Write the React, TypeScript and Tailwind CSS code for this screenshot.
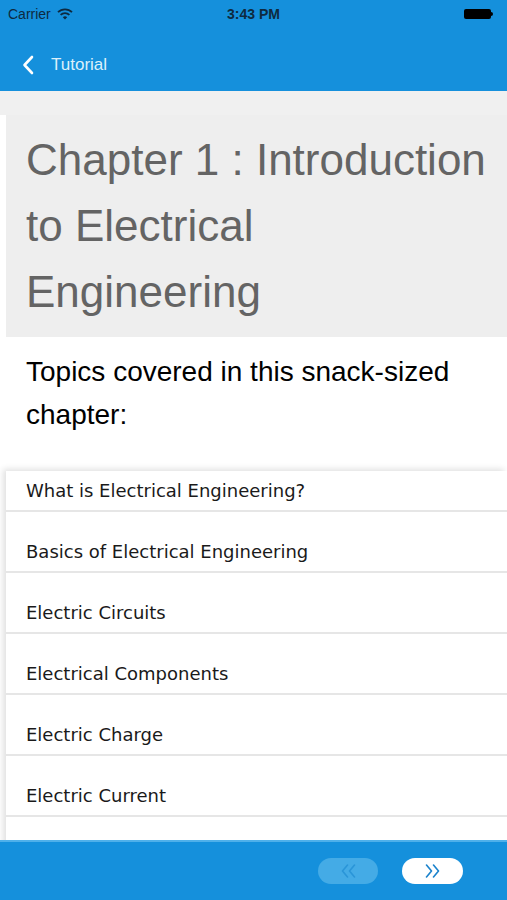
import React from "react";

const topics = [
  "What is Electrical Engineering?",
  "Basics of Electrical Engineering",
  "Electric Circuits",
  "Electrical Components",
  "Electric Charge",
  "Electric Current",
];

function Chevrons({ dir, className }: { dir: "left" | "right"; className: string }) {
  const d = dir === "left" ? "M7 1 L2 7 L7 13 M14 1 L9 7 L14 13" : "M2 1 L7 7 L2 13 M9 1 L14 7 L9 13";
  return (
    <svg width="17" height="14" viewBox="0 0 16 14" className={className}>
      <path d={d} fill="none" stroke="currentColor" strokeWidth="1.6" strokeLinecap="round" strokeLinejoin="round" />
    </svg>
  );
}

export default function App() {
  return (
    <div className="flex h-[900px] w-[507px] flex-col overflow-hidden bg-white font-['Liberation_Sans',Arial,sans-serif]">
      {/* status + nav */}
      <div className="h-[91px] shrink-0 bg-[#1590dc]">
        <div className="relative flex h-[28px] items-center px-[8px] text-[14px] text-[#0e2a40]">
          <span>Carrier</span>
          <svg width="16" height="12" viewBox="0 0 16 12" className="ml-[6px]">
            <path d="M1 4.2 A10 10 0 0 1 15 4.2" fill="none" stroke="#0e2a40" strokeWidth="1.8" />
            <path d="M3.6 6.9 A6.3 6.3 0 0 1 12.4 6.9" fill="none" stroke="#0e2a40" strokeWidth="1.8" />
            <path d="M8 11.5 L5.8 9.3 A3.1 3.1 0 0 1 10.2 9.3 Z" fill="#0e2a40" />
          </svg>
          <span className="absolute left-1/2 -translate-x-1/2 font-bold">3:43 PM</span>
          <div className="ml-auto mr-[6px] flex items-center">
            <div className="h-[10px] w-[27px] rounded-[2px] bg-black" />
            <div className="h-[4px] w-[2px] rounded-r-sm bg-black" />
          </div>
        </div>
        <div className="flex h-[62px] items-center pl-[22px] pt-[12px]">
          <svg width="12" height="20" viewBox="0 0 12 20">
            <path d="M10 2 L2.5 10 L10 18" fill="none" stroke="white" strokeWidth="2.6" strokeLinecap="round" strokeLinejoin="round" />
          </svg>
          <span className="ml-[17px] text-[17px] text-[#dcf0fb]">Tutorial</span>
        </div>
      </div>

      {/* scroll content */}
      <div className="flex-1 overflow-hidden">
        <div className="h-[24px] bg-[#f0f0f0]" />
        <div className="ml-[6px] bg-[#eeeeee] pl-[20px] pr-[10px] pt-[12px] pb-[12px]">
          <h1 className="text-[44px] leading-[66px] text-[#646464]">Chapter 1 : Introduction to Electrical Engineering</h1>
        </div>
        <p className="mt-[13px] pl-[26px] pr-[20px] text-[28px] leading-[43px] text-black">
          Topics covered in this snack-sized chapter:
        </p>
        <div className="mt-[35px] ml-[6px] min-h-[400px] bg-white shadow-[-3px_-2px_6px_rgba(0,0,0,0.12)]">
          {topics.map((t, i) => (
            <div
              key={t}
              className={`flex h-[41px] items-center border-b-2 border-[#e6e6e6] pl-[20px] font-['DejaVu_Sans',Verdana,sans-serif] text-[18px] text-[#1a1a1a] ${i === 0 ? "" : "mt-[20px]"}`}
            >
              {t}
            </div>
          ))}
        </div>
      </div>

      {/* bottom bar */}
      <div className="flex h-[60px] shrink-0 items-center justify-end gap-[24px] border-t-2 border-[#4fb0ea] bg-[#1590dc] pr-[44px]">
        <button className="flex h-[26px] w-[60px] items-center justify-center rounded-full bg-[#44abe6]">
          <Chevrons dir="left" className="text-[#2a95d8]" />
        </button>
        <button className="flex h-[26px] w-[61px] items-center justify-center rounded-full bg-white">
          <Chevrons dir="right" className="text-[#1a82cc]" />
        </button>
      </div>
    </div>
  );
}
